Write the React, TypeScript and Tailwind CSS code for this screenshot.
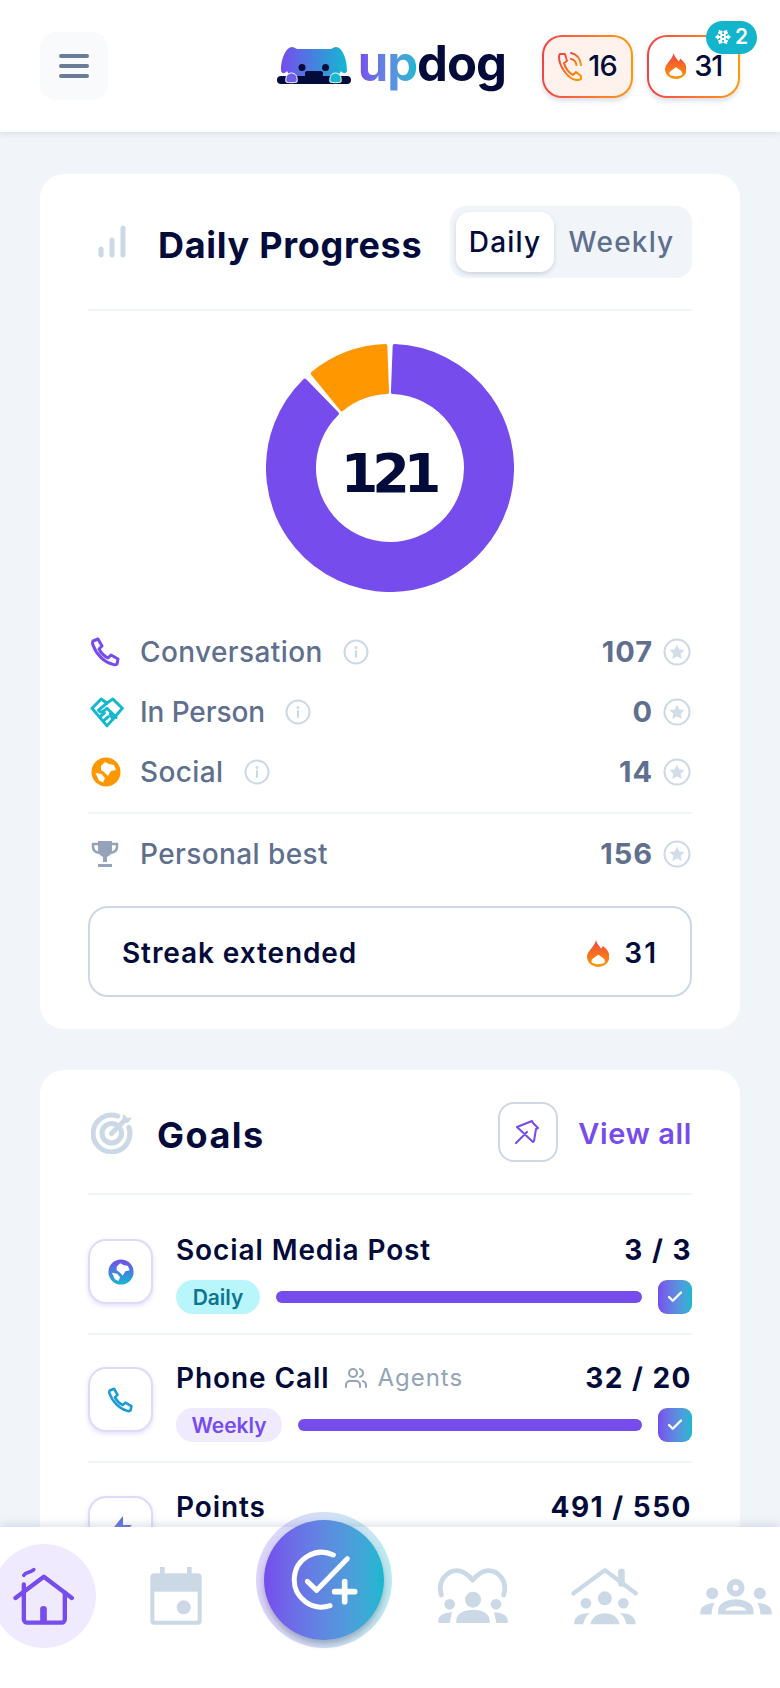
import React from 'react';
import { Check, Snowflake, Users } from 'lucide-react';

function polar(r: number, deg: number) {
  const rad = ((deg - 90) * Math.PI) / 180;
  return `${(124 + r * Math.cos(rad)).toFixed(2)} ${(124 + r * Math.sin(rad)).toFixed(2)}`;
}

// ring segment, corners get rounded by the stroke
function ringPath(r1: number, r2: number, a0: number, a1: number) {
  const large = a1 - a0 > 180 ? 1 : 0;
  return `M${polar(r2, a0)} A${r2} ${r2} 0 ${large} 1 ${polar(r2, a1)} L${polar(r1, a1)} A${r1} ${r1} 0 ${large} 0 ${polar(r1, a0)} Z`;
}

function Flame({ size = 24, id }: { size?: number; id: string }) {
  return (
    <svg width={size * 0.83} height={size} viewBox="0 0 20 24">
      <defs>
        <linearGradient id={id} x1="0" y1="0" x2="0" y2="1">
          <stop offset="0" stopColor="#ef4444" />
          <stop offset="1" stopColor="#ff9800" />
        </linearGradient>
      </defs>
      <path
        d="M8 0c1 4 3 5 4.500 7.500 1-.5 1.500-1.500 1.500-2.500C18 8 20 11 20 15c0 5-4.500 9-10 9S0 20 0 15C0 10 7 6 8 0Z"
        fill={`url(#${id})`}
      />
      <path d="M10 13c2 2 6 3 6 6 0 2.200-2.500 2.500-6 2.500S4 20.700 4 19c0-2.500 4-3.500 6-6Z" fill="#fff" />
    </svg>
  );
}

function Info() {
  return (
    <svg width="26" height="26" viewBox="0 0 26 26" fill="none" stroke="#cbd8e6" strokeWidth="2">
      <circle cx="13" cy="13" r="11.500" />
      <path d="M13 12v6" strokeLinecap="round" />
      <circle cx="13" cy="8.500" r="0.6" />
    </svg>
  );
}

function StarCircle() {
  return (
    <svg width="28" height="28" viewBox="0 0 28 28">
      <circle cx="14" cy="14" r="12.500" fill="none" stroke="#cbd8e6" strokeWidth="2" />
      <path d="M14 6.500l2.300 4.900 5.300.6-3.900 3.700 1 5.300-4.700-2.600-4.700 2.600 1-5.300-3.900-3.700 5.300-.6Z" fill="#d3dde9" />
    </svg>
  );
}

function Globe({ fill, size = 30, defs }: { fill: string; size?: number; defs?: React.ReactNode }) {
  return (
    <svg width={size} height={size} viewBox="0 0 30 30">
      {defs}
      <circle cx="15" cy="15" r="14.500" fill={fill} />
      <path d="M10 9l4-4 4 2 5 1 2 5-5 1-3 5-4-4-3-2ZM4.500 16l6 1 3.500 4-2 4.500-4-2Z" fill="#fff" />
    </svg>
  );
}

function StatRow({
  icon,
  label,
  value,
  info = true,
  labelClass = 'tracking-[0.4px]',
}: {
  icon: React.ReactNode;
  label: string;
  value: string;
  info?: boolean;
  labelClass?: string;
}) {
  return (
    <div className="flex h-[60px] items-center">
      <div className="flex w-[52px] shrink-0 items-center pl-[3px]">{icon}</div>
      <span className={`text-[28px] font-medium text-[#5f6f8e] ${labelClass}`}>{label}</span>
      {info && (
        <span className="ml-[20px]">
          <Info />
        </span>
      )}
      <span className="ml-auto text-[29px] font-bold tracking-[1px] text-[#5f6f8e]">{value}</span>
      <span className="ml-[10px] mr-[1px]">
        <StarCircle />
      </span>
    </div>
  );
}

function GoalRow({
  icon,
  title,
  score,
  pill,
  pillClass,
  extra,
  last,
}: {
  icon: React.ReactNode;
  title: string;
  score: string;
  pill?: string;
  pillClass?: string;
  extra?: React.ReactNode;
  last?: boolean;
}) {
  return (
    <div className={last ? 'flex pt-[33px]' : 'flex h-[128px] items-start border-b-2 border-[#f1f5f9] pt-[32px]'}>
      <div className="flex h-[65px] w-[65px] shrink-0 items-center justify-center rounded-[18px] border-2 border-[#e0d9fb] bg-white shadow-[0_2px_5px_rgba(118,76,237,0.18)]">
        {icon}
      </div>
      <div className="ml-[23px] min-w-0 flex-1">
        <div className="-mt-[6px] flex h-[34px] items-center">
          <span className="text-[28px] font-semibold tracking-[0.9px] text-[#020b3a]">{title}</span>
          {extra}
          <span className="ml-auto text-[28px] font-bold tracking-[1.5px] text-[#020b3a]">{score}</span>
        </div>
        {pill && (
          <div className="mt-[13px] flex h-[34px] items-center">
            <span className={`flex h-[34px] items-center justify-center rounded-full pt-[2px] text-[21px] font-semibold ${pillClass}`}>{pill}</span>
            <div className="mx-[16px] h-[12px] flex-1 rounded-full bg-[#764ced]" />
            <span className="flex h-[34px] w-[34px] items-center justify-center rounded-[9px] bg-gradient-to-r from-[#764ced] to-[#14b8d0]">
              <Check size={18} color="#fff" strokeWidth={3} />
            </span>
          </div>
        )}
      </div>
    </div>
  );
}

function Logo() {
  return (
    <div className="flex items-center">
      <svg width="74" height="38" viewBox="0 0 74 38">
        <defs>
          <linearGradient id="dog" x1="0" y1="0" x2="1" y2="0">
            <stop offset="0" stopColor="#764ced" />
            <stop offset="1" stopColor="#14b8d0" />
          </linearGradient>
        </defs>
        <path
          d="M4 23C4 12 9 0 15 0c2 0 3 1 5 2h34c2-1 3-2 5-2 6 0 11 12 11 23 0 4-4 4-6 1-1 3-4 5-6 5H16c-2 0-5-2-6-5-2 3-6 3-6-1Z"
          fill="url(#dog)"
        />
        <rect x="0" y="29" width="74" height="8" rx="4" fill="#020b3a" />
        <path d="M28 30v-4c0-1 1-2 2-2h14c1 0 2 1 2 2v4Z" fill="#020b3a" />
        <circle cx="25" cy="20.500" r="3.500" fill="#020b3a" />
        <circle cx="48.500" cy="20.500" r="3.500" fill="#020b3a" />
        <path d="M9 35c-1-6 2-9 5.500-9s6.500 3 5.500 9c-3.500 1-7.500 1-11 0Z" fill="#6f5fe8" stroke="#fff" strokeWidth="1" />
        <path d="M53 35c-1-6 2-9 5.500-9s6.500 3 5.500 9c-3.500 1-7.500 1-11 0Z" fill="#14b8d0" stroke="#fff" strokeWidth="1" />
      </svg>
      <span className="ml-[7px] -mt-[6px] text-[49px] leading-none font-bold tracking-[-1px]">
        <span className="bg-gradient-to-r from-[#764ced] to-[#14b8d0] bg-clip-text text-transparent">up</span>
        <span className="text-[#020b3a]">dog</span>
      </span>
    </div>
  );
}

function Header() {
  return (
    <header className="relative z-10 flex h-[132px] items-center justify-between bg-white pr-[40px] pl-[40px] shadow-[0_2px_6px_rgba(148,163,184,0.25)]">
      <button className="flex h-[68px] w-[68px] items-center justify-center rounded-[16px] bg-[#f8fafc]">
        <svg width="30" height="26" viewBox="0 0 30 26" stroke="#6b7c99" strokeWidth="4" strokeLinecap="round">
          <path d="M2 3h26M2 13h26M2 23h26" />
        </svg>
      </button>
      <div className="flex items-center">
        <Logo />
        <div className="ml-[36px] h-[63px] w-[91px] rounded-[20px] bg-gradient-to-r from-[#ef4444] to-[#ff9800] p-[2px] shadow-[0_3px_5px_rgba(148,163,184,0.35)]">
          <div className="flex h-full items-center justify-center gap-[6px] rounded-[18px] bg-[#fff2ec]">
            <svg width="24" height="30" viewBox="0 0 24 30" fill="none" strokeWidth="2" strokeLinecap="round" strokeLinejoin="round">
              <defs>
                <linearGradient id="call" x1="0" y1="0" x2="1" y2="1">
                  <stop offset="0" stopColor="#ef4444" />
                  <stop offset="1" stopColor="#ff9800" />
                </linearGradient>
              </defs>
              <path d="M2 3h5l2 7-3 2c1 5 5 10 9 12l3-3 5 4v3c-1 1-3 1-5 1C10 28 1 15 1 6c0-1 0-2 1-3Z" stroke="url(#call)" />
              <path d="M13 2c5 1 9 5 10 12M13 8c3 .5 5 3 5.500 6" stroke="url(#call)" />
            </svg>
            <span className="text-[29px] font-medium tracking-[-1px] text-[#020b3a]">16</span>
          </div>
        </div>
        <div className="relative ml-[14px] h-[63px] w-[93px] rounded-[20px] bg-gradient-to-r from-[#ef4444] to-[#ff9800] p-[2px] shadow-[0_3px_5px_rgba(148,163,184,0.35)]">
          <div className="flex h-full items-center justify-center gap-[8px] rounded-[18px] bg-white">
            <Flame size={26} id="flame-head" />
            <span className="text-[29px] font-medium tracking-[-1px] text-[#020b3a]">31</span>
          </div>
          <span className="absolute -top-[14px] -right-[17px] flex h-[33px] w-[51px] items-center justify-center gap-[4px] rounded-full bg-[#12b5cb] text-[21px] font-semibold text-white">
            <Snowflake size={16} strokeWidth={3} />
            2
          </span>
        </div>
      </div>
    </header>
  );
}

function ProgressCard() {
  return (
    <section className="rounded-[24px] bg-white px-[48px] pt-[32px] pb-[32px]">
      <div className="flex h-[105px] items-start border-b-2 border-[#f1f5f9]">
        <div className="flex h-[72px] w-[70px] items-center">
          <svg width="32" height="34" viewBox="0 0 32 34" className="ml-[9px]" fill="none" stroke="#cbd8e6" strokeWidth="5" strokeLinecap="round">
            <path d="M4 24v6M15 15v15M26 3v27" />
          </svg>
        </div>
        <h2 className="mt-[17px] text-[36px] leading-[44px] font-bold tracking-[0.7px] text-[#020b3a]">Daily Progress</h2>
        <div className="ml-auto flex h-[72px] w-[242px] shrink-0 items-center rounded-[16px] bg-[#f1f5f9] px-[6px]">
          <span className="flex h-[60px] w-[98px] items-center justify-center rounded-[14px] bg-white text-[28px] font-medium tracking-[1.2px] text-[#020b3a] shadow-[0_2px_4px_rgba(148,163,184,0.4)]">
            Daily
          </span>
          <span className="flex-1 pl-[3px] text-center text-[28px] font-medium tracking-[1.2px] text-[#5f6f8e]">Weekly</span>
        </div>
      </div>

      <div className="relative mx-auto mt-[33px] h-[248px] w-[248px]">
        <svg width="248" height="248" viewBox="0 0 248 248" strokeLinejoin="round" strokeWidth="4">
          <path d={ringPath(76, 122, 2.2, 315.7)} fill="#764ced" stroke="#764ced" />
          <path d={ringPath(76, 122, 320.7, 357.8)} fill="#ff9800" stroke="#ff9800" />
        </svg>
        <span className="absolute inset-0 flex items-center justify-center pt-[10px] pr-[4px] font-['DejaVu_Sans',sans-serif] text-[54px] font-bold tracking-[-6px] text-[#020b3a]">
          121
        </span>
      </div>

      <div className="mt-[30px]">
        <StatRow
          label="Conversation"
          value="107"
          icon={
            <svg width="30" height="30" viewBox="0 0 30 30" fill="none" stroke="#764ced" strokeWidth="3" strokeLinejoin="round" strokeLinecap="round">
              <path d="M2 4l5-2 4 7-3 3c2 4 5 7 9 9l3-3 7 4-1 5c-1 1-3 1-5 0C13 25 5 17 2 8c-.5-1-.5-3 0-4Z" />
            </svg>
          }
        />
        <StatRow
          label="In Person"
          value="0"
          labelClass="tracking-[-0.1px]"
          icon={
            <svg width="34" height="31" viewBox="56 228 104 94" fill="none" stroke="#14b8cc" strokeWidth="9" strokeLinejoin="round" strokeLinecap="round" className="-ml-[1px]">
              <path d="M62 262L90 234L108 246L126 234L155 262L108 316Z" />
              <path d="M108 246L82 268C88 278 98 272 108 262L136 290" />
              <path d="M90 285L100 277M100 298L112 288M118 280L126 296" />
            </svg>
          }
        />
        <StatRow label="Social" value="14" icon={<Globe fill="#ff9800" />} />
        <div className="mt-[10px] mb-[10px] border-t-2 border-[#f1f5f9]" />
        <StatRow
          label="Personal best"
          value="156"
          info={false}
          icon={
            <svg width="28" height="28" viewBox="0 0 28 28" fill="none">
              <path d="M7 1h14v9c0 4-3 7-7 7s-7-3-7-7Z" fill="#94a3b8" />
              <path d="M7 4H2v3c0 3 2 5 6 6M21 4h5v3c0 3-2 5-6 6" stroke="#94a3b8" strokeWidth="2.500" />
              <path d="M12 16h4v6h-4ZM7 24h14v3H7Z" fill="#94a3b8" />
            </svg>
          }
        />
      </div>

      <div className="mt-[22px] flex h-[91px] items-center rounded-[20px] border-2 border-[#cbd8e6] pt-[3px] pr-[32px] pl-[32px]">
        <span className="text-[28px] font-semibold tracking-[0.9px] text-[#020b3a]">Streak extended</span>
        <span className="ml-auto">
          <Flame size={27} id="flame-streak" />
        </span>
        <span className="ml-[15px] text-[28px] font-semibold tracking-[2px] text-[#020b3a]">31</span>
      </div>
    </section>
  );
}

function GoalsCard() {
  return (
    <section className="rounded-[24px] bg-white px-[48px] pt-[32px] pb-[40px]">
      <div className="mb-[12px] flex h-[93px] items-start border-b-2 border-[#f1f5f9]">
        <div className="flex h-[60px] w-[69px] items-center">
          <svg width="43" height="43" viewBox="0 0 42 42" className="ml-[3px]" fill="none" stroke="#cbd8e6" strokeWidth="5" strokeLinecap="round">
            <path d="M26 5a18 18 0 1 0 11 11" />
            <path d="M24 13a9.500 9.500 0 1 0 5 5" />
            <path d="M20 22L32 10" />
            <path d="M31 10l1-6 3 3 4 0-3 4-5 0Z" fill="#cbd8e6" strokeWidth="1" />
          </svg>
        </div>
        <h2 className="mt-[11px] text-[36px] leading-[44px] font-bold tracking-[1.5px] text-[#020b3a]">Goals</h2>
        <button className="ml-auto flex h-[60px] w-[60px] items-center justify-center rounded-[16px] border-2 border-[#cbd8e6]">
          <svg width="26" height="26" viewBox="0 0 26 26" fill="none" stroke="#764ced" strokeWidth="2" strokeLinecap="round" strokeLinejoin="round">
            <path d="M1 24l11-11M2 8l15-6 1 2 5 5-2 1-2 12-1 1Z" />
          </svg>
        </button>
        <span className="mt-[13px] ml-[20px] text-[29px] leading-[38px] font-semibold tracking-[0.6px] text-[#764ced]">View all</span>
      </div>

      <GoalRow
        icon={
          <Globe
            size={26}
            fill="url(#globe-grad)"
            defs={
              <defs>
                <linearGradient id="globe-grad" x1="0" y1="0" x2="0" y2="1">
                  <stop offset="0" stopColor="#764ced" />
                  <stop offset="1" stopColor="#14b8d0" />
                </linearGradient>
              </defs>
            }
          />
        }
        title="Social Media Post"
        score="3 / 3"
        pill="Daily"
        pillClass="w-[84px] bg-[#b9f6fb] text-[#0e7490]"
      />
      <GoalRow
        icon={
          <svg width="26" height="26" viewBox="0 0 30 30" fill="none" stroke="#1d9bd8" strokeWidth="3" strokeLinejoin="round">
            <path d="M2 4l5-2 4 7-3 3c2 4 5 7 9 9l3-3 7 4-1 5c-1 1-3 1-5 0C13 25 5 17 2 8c-.5-1-.5-3 0-4Z" />
          </svg>
        }
        title="Phone Call"
        score="32 / 20"
        pill="Weekly"
        pillClass="w-[106px] bg-[#efeafd] text-[#764ced]"
        extra={
          <span className="ml-[15px] flex items-center gap-[9px] text-[24px] tracking-[1px] text-[#94a3b8]">
            <Users size={24} />
            Agents
          </span>
        }
      />
      <GoalRow
        last
        icon={
          <svg width="28" height="28" viewBox="0 0 28 28" fill="#5b6fe0">
            <path d="M16 1L3 17h9l-3 10 16-17h-9Z" />
          </svg>
        }
        title="Points"
        score="491 / 550"
      />
    </section>
  );
}

function BottomNav() {
  return (
    <nav className="absolute right-0 bottom-0 left-0 z-20 h-[161px] overflow-visible bg-white shadow-[0_-3px_8px_rgba(148,163,184,0.3)]">
      <div className="-ml-[22px] flex h-[120px] w-[824px] items-center pt-[18px]">
        <div className="flex w-[132px] justify-center">
          <div className="flex h-[104px] w-[104px] items-center justify-center rounded-full bg-[#efeafd]">
            <svg width="62" height="60" viewBox="40 370 185 180" fill="none" stroke="#764ced" strokeWidth="13" strokeLinecap="round" strokeLinejoin="round">
              <path d="M47 466L132 402L216 466" />
              <path d="M72 425V530a10 10 0 0 0 10 10H185a10 10 0 0 0 10-10V450" />
              <path d="M131 535V500" strokeWidth="20" />
              <path d="M72 398c8-12 14-4 30-17" strokeWidth="11" />
            </svg>
          </div>
        </div>
        <div className="flex w-[132px] justify-center">
          <svg width="52" height="58" viewBox="450 380 156 174">
            <path d="M487 382v24M568 382v24" stroke="#cbd8e6" strokeWidth="14" strokeLinecap="round" />
            <rect x="451" y="399" width="154" height="154" rx="12" fill="#cbd8e6" />
            <rect x="463" y="454" width="130" height="87" fill="#fff" />
            <circle cx="551" cy="501" r="21" fill="#cbd8e6" />
          </svg>
        </div>
        <div className="flex w-[164px] justify-center">
          <div className="-mt-[32px] flex h-[136px] w-[136px] items-center justify-center rounded-full bg-gradient-to-r from-[#764ced]/25 to-[#14b8d0]/30">
            <div className="flex h-[120px] w-[120px] items-center justify-center rounded-full bg-gradient-to-r from-[#764ced] to-[#14b8d0] shadow-[0_4px_6px_rgba(51,65,85,0.35)]">
              <svg width="68" height="64" viewBox="880 325 204 192" fill="none" stroke="#fff" strokeWidth="15" strokeLinecap="round" strokeLinejoin="round">
                <path d="M1010 346A82 82 0 1 0 1000 498" />
                <path d="M932 425L960 452L1052 357" />
                <path d="M1014 456H1074M1044 426V486" strokeWidth="17" />
              </svg>
            </div>
          </div>
        </div>
        <div className="flex w-[132px] justify-center">
          <svg width="71" height="56" viewBox="108 388 213 168" fill="#cbd8e6">
            <path d="M121 469C108 425 140 395 170 396C190 398 205 412 215 425C225 412 240 398 260 396C290 395 322 425 308 469" fill="none" stroke="#cbd8e6" strokeWidth="14" strokeLinecap="round" strokeLinejoin="round" />
            <circle cx="216" cy="483" r="24" />
            <circle cx="146" cy="497" r="16" />
            <circle cx="285" cy="497" r="16" />
            <path d="M166 553V545C166 525 190 513 216 513S266 525 266 545V553Z" />
            <path d="M112 553V545C112 530 130 522 153 521L146 553ZM320 553V545C320 530 302 522 279 521L286 553Z" />
          </svg>
        </div>
        <div className="flex w-[132px] justify-center">
          <svg width="67" height="58" viewBox="510 376 202 174" fill="#cbd8e6">
            <path d="M518 455L612 385L705 455" fill="none" stroke="#cbd8e6" strokeWidth="13" strokeLinecap="round" strokeLinejoin="round" />
            <path d="M662 390V425" stroke="#cbd8e6" strokeWidth="20" strokeLinecap="round" />
            <circle cx="612" cy="470" r="21" />
            <circle cx="555" cy="485" r="16" />
            <circle cx="668" cy="485" r="16" />
            <path d="M568 548C575 525 590 515 612 515S650 525 657 548Z" />
            <path d="M519 548C520 525 535 514 568 514C555 522 550 535 547 548ZM705 548C704 525 689 514 656 514C669 522 674 535 677 548Z" />
          </svg>
        </div>
        <div className="flex w-[132px] justify-center">
          <svg width="72" height="37" viewBox="899 412 218 111" fill="#cbd8e6">
            <circle cx="1007" cy="441" r="18" fill="none" stroke="#cbd8e6" strokeWidth="18" />
            <circle cx="936" cy="458" r="18" />
            <circle cx="1080" cy="458" r="18" />
            <path fillRule="evenodd" d="M954 522V510C954 488 980 476 1007 476S1061 488 1061 510V522ZM975 510H1040C1035 500 1020 497 1007 497S980 500 975 510Z" />
            <path d="M900 522V515C900 500 915 488 943 487C937 498 934 510 934 522ZM1116 522V515C1116 500 1101 488 1073 487C1079 498 1082 510 1082 522Z" />
          </svg>
        </div>
      </div>
    </nav>
  );
}

export default function App() {
  return (
    <div className="relative h-[1688px] w-[780px] overflow-hidden bg-[#f1f5f9] font-['Inter','Noto_Sans',sans-serif]">
      <Header />
      <main className="flex flex-col gap-[41px] px-[40px] pt-[42px]">
        <ProgressCard />
        <GoalsCard />
      </main>
      <BottomNav />
    </div>
  );
}
